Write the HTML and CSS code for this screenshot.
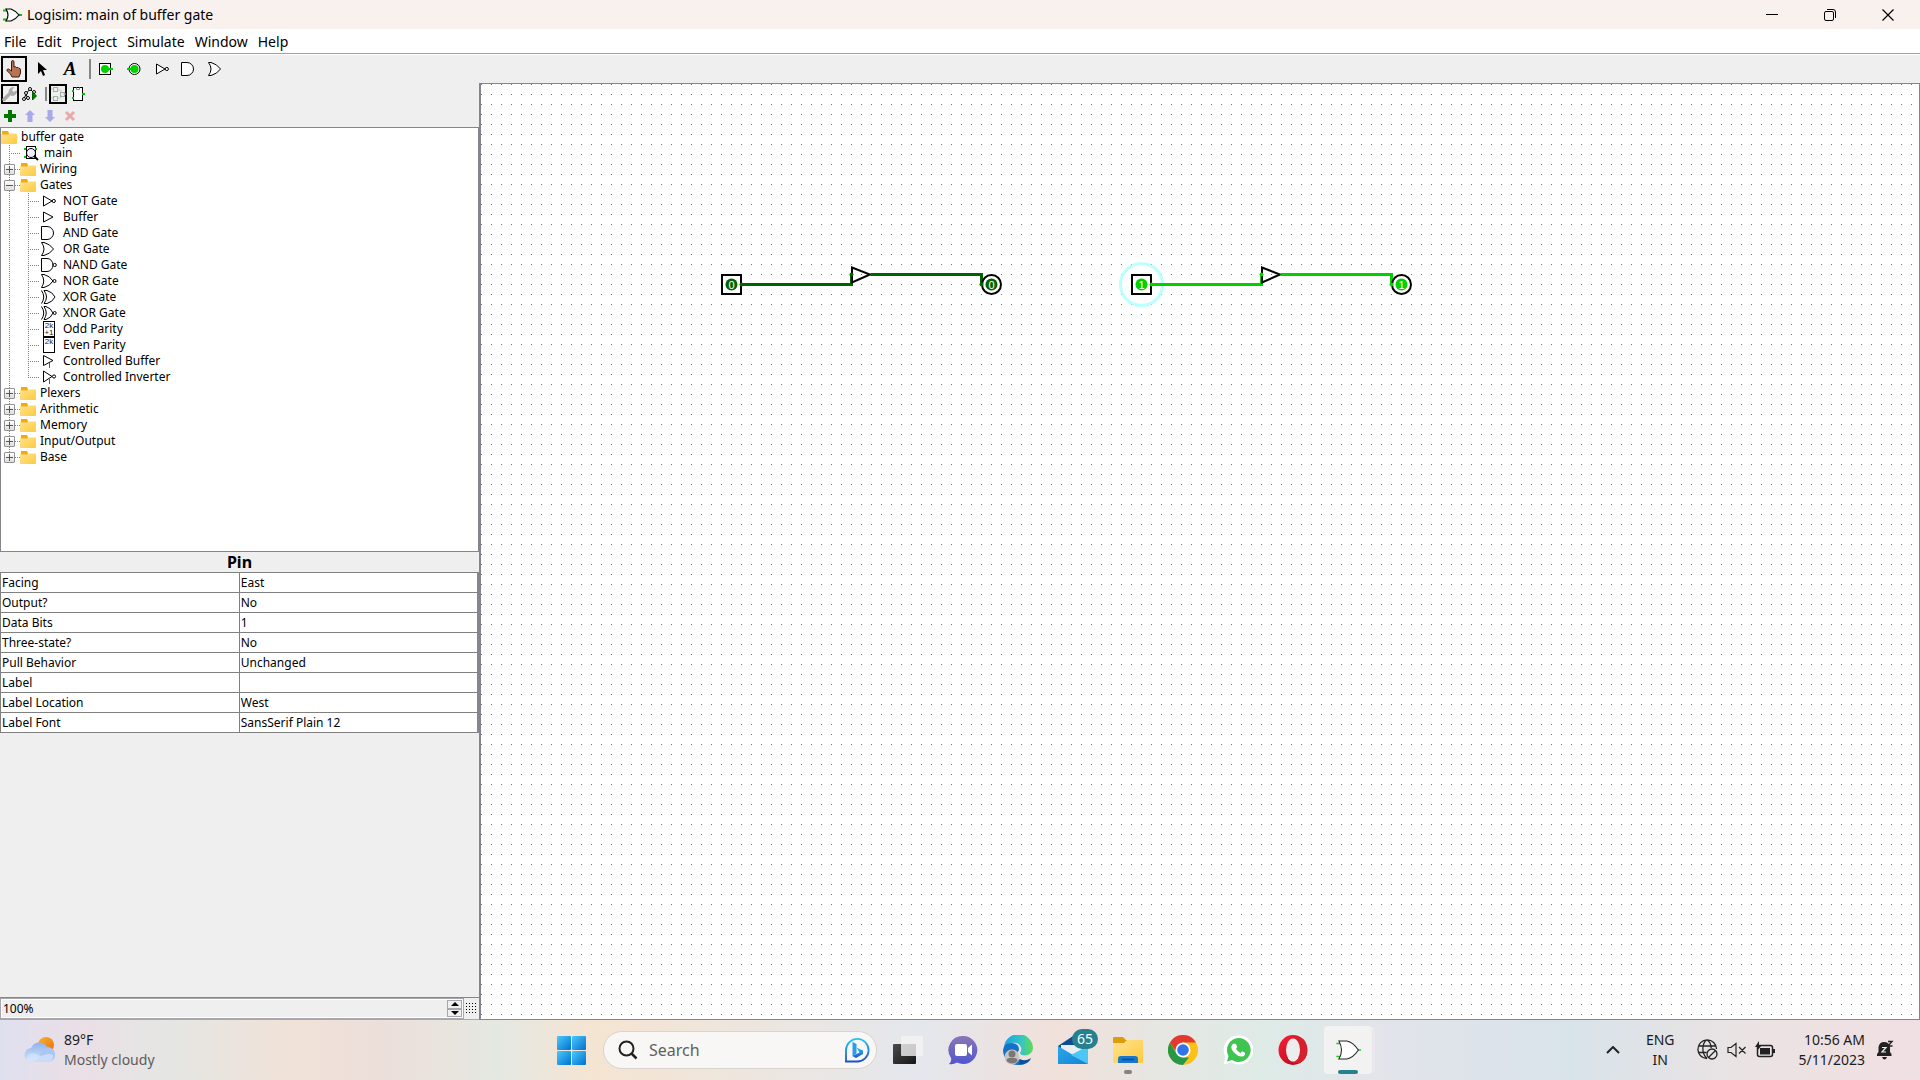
FILE: index.html
```html
<!DOCTYPE html>
<html lang="en">
<head>
<meta charset="utf-8">
<title>Logisim: main of buffer gate</title>
<link rel="stylesheet" href="styles.css">
</head>
<body>
<svg class="defs" aria-hidden="true">
  <defs>
    <linearGradient id="gFolder" x1="0" y1="0" x2="1" y2="1"><stop offset="0" stop-color="#ffe391"/><stop offset="1" stop-color="#ffca3c"/></linearGradient>
    <linearGradient id="gWin" x1="0" y1="0" x2="1" y2="1"><stop offset="0" stop-color="#4cc9fb"/><stop offset="1" stop-color="#0070d0"/></linearGradient>
    <linearGradient id="gBing" x1="0" y1="0" x2="0" y2="1"><stop offset="0" stop-color="#27c8ee"/><stop offset="1" stop-color="#1d50c8"/></linearGradient>
    <linearGradient id="gChat" x1="0" y1="0" x2="0" y2="1"><stop offset="0" stop-color="#8b76b8"/><stop offset="1" stop-color="#5055cf"/></linearGradient>
    <linearGradient id="gEdge" x1="0" y1="0" x2="1" y2="0"><stop offset="0" stop-color="#1f9fe0"/><stop offset=".6" stop-color="#35c5c8"/><stop offset="1" stop-color="#5fdc4c"/></linearGradient>
    <linearGradient id="gMail" x1="0" y1="0" x2="1" y2="1"><stop offset="0" stop-color="#2aa9e8"/><stop offset="1" stop-color="#1681d6"/></linearGradient>
    <linearGradient id="gCloud" x1="0" y1="0" x2="0" y2="1"><stop offset="0" stop-color="#8fb4ef"/><stop offset="1" stop-color="#d4e5fc"/></linearGradient>
    <linearGradient id="gSun" x1="0" y1="0" x2="1" y2="1"><stop offset="0" stop-color="#f8b62a"/><stop offset="1" stop-color="#ea6a12"/></linearGradient>
    <linearGradient id="gOpera" x1="0" y1="0" x2="1" y2="1"><stop offset="0" stop-color="#ff1f35"/><stop offset="1" stop-color="#a8071a"/></linearGradient>
    <linearGradient id="gDark" x1="0" y1="0" x2="1" y2="1"><stop offset="0" stop-color="#4a4a4a"/><stop offset="1" stop-color="#161616"/></linearGradient>
    <symbol id="folder" viewBox="0 0 16 13"><path d="M1 1h6l1 2h7v4H1z" fill="#f0a90c"/><rect x="0" y="2.500" width="16" height="10.500" rx="1" fill="url(#gFolder)"/><path d="M1 0h6l1 2.500-1 1H1z" fill="#f2ac10"/></symbol>
    <symbol id="not" viewBox="0 0 16 16"><path d="M2.500 3v10L11 8z" fill="#fff" stroke="#000"/><circle cx="12.800" cy="8" r="1.600" fill="#fff" stroke="#000"/></symbol>
    <symbol id="buffer" viewBox="0 0 16 16"><path d="M2.500 3v10L12 8z" fill="#fff" stroke="#000"/></symbol>
    <symbol id="and" viewBox="0 0 16 16"><path d="M.5 1.500H6a6.500 6.500 0 0 1 0 13H.5z" fill="#fff" stroke="#000"/></symbol>
    <symbol id="or" viewBox="0 0 16 16"><path d="M.5 1.500H3Q9 3 12.500 8 9 13 3 14.500H.5Q5.500 8 .5 1.500z" fill="#fff" stroke="#000"/></symbol>
    <symbol id="nand" viewBox="0 0 16 16"><path d="M.5 1.500H6a6 6.500 0 0 1 0 13H.5z" fill="#fff" stroke="#000"/><circle cx="13.700" cy="8" r="1.600" fill="#fff" stroke="#000"/></symbol>
    <symbol id="nor" viewBox="0 0 16 16"><path d="M.5 1.500H3Q9 3 12 8 9 13 3 14.500H.5Q5 8 .5 1.500z" fill="#fff" stroke="#000"/><circle cx="13.500" cy="8" r="1.500" fill="#fff" stroke="#000"/></symbol>
    <symbol id="xor" viewBox="0 0 16 16"><path d="M3 1.500H6Q11.500 3 14 8 11.500 13 6 14.500H3Q8 8 3 1.500zM.5 1.500Q5 8 .5 14.500" fill="#fff" stroke="#000"/></symbol>
    <symbol id="xnor" viewBox="0 0 16 16"><path d="M3 1.500H5Q10 3 12 8 10 13 5 14.500H3Q7.500 8 3 1.500zM.5 1.500Q5 8 .5 14.500" fill="#fff" stroke="#000"/><circle cx="13.700" cy="8" r="1.500" fill="#fff" stroke="#000"/></symbol>
    <symbol id="odd" viewBox="0 0 16 16"><rect x="2.500" y=".5" width="11" height="15" fill="#fff" stroke="#000"/><text x="8" y="7" class="mini">2k</text><text x="8" y="14" class="mini">+1</text></symbol>
    <symbol id="even" viewBox="0 0 16 16"><rect x="2.500" y=".5" width="11" height="15" fill="#fff" stroke="#000"/><text x="8" y="7" class="mini">2k</text></symbol>
    <symbol id="cbuf" viewBox="0 0 16 16"><path d="M2.500 2.500v10L12 7.500z" fill="#fff" stroke="#000"/><path d="M8.500 10v5" stroke="#00a000"/></symbol>
    <symbol id="cinv" viewBox="0 0 16 16"><path d="M2.500 2v11L11 7.500z" fill="#fff" stroke="#000"/><circle cx="13" cy="7.500" r="1.600" fill="#fff" stroke="#000"/><path d="M8.500 10v5" stroke="#00a000"/></symbol>
    <symbol id="logo" viewBox="0 0 20 14"><path d="M1 2.500h4M1 11.500h4M16 7h4" stroke="#0c0" stroke-width="2"/><path d="M4 1h5Q14 3 17 7 14 11 9 13H4Q8 7 4 1z" fill="#fff" stroke="#000" stroke-width="1.200"/></symbol>
  </defs>
</svg>

<div class="app">
  <header class="titlebar">
    <svg class="logo" width="20" height="14"><use href="#logo"/></svg>
    <h1>Logisim: main of buffer gate</h1>
    <div class="winbtns">
      <button aria-label="Minimize"><svg width="12" height="12"><path d="M0 5.500h12" stroke="#000"/></svg></button>
      <button aria-label="Restore"><svg width="12" height="12" fill="none" stroke="#000"><rect x=".5" y="2.500" width="9" height="9" rx="1.500"/><path d="M3 .5h6a2.500 2.500 0 0 1 2.500 2.500v6"/></svg></button>
      <button aria-label="Close"><svg width="12" height="12"><path d="M.5.5l11 11M11.500.5l-11 11" stroke="#000" stroke-width="1.200"/></svg></button>
    </div>
  </header>

  <nav class="menubar">
    <button>File</button><button>Edit</button><button>Project</button><button>Simulate</button><button>Window</button><button>Help</button>
  </nav>

  <div class="toolbar">
    <button class="on" aria-label="Poke tool"><svg width="16" height="18"><path d="M5.500 9V2q0-1.500 1.200-1.500T8 2v5q2-.8 2.500.5 1.800-.5 2.200.7 1.800-.2 1.800 1.800v3l-1.500 4H6L4.500 14 .8 10.500q0-1.500 1.700-1.500l3 2z" fill="#b87352" stroke="#3a1c10"/></svg></button>
    <button aria-label="Edit tool"><svg width="12" height="16"><path d="M2 1v12l3-3 2 5 2-1-2-5h4z" fill="#000"/></svg></button>
    <button class="text-tool" aria-label="Text tool">A</button>
    <i class="sep"></i>
    <button aria-label="Input pin"><svg width="14" height="14"><rect x=".5" y="1.500" width="11" height="11" fill="#fff" stroke="#000"/><circle cx="6" cy="7" r="4" fill="#00d200"/><path d="M9 7h5" stroke="#00d200" stroke-width="2"/></svg></button>
    <button aria-label="Output pin"><svg width="14" height="14"><circle cx="7.500" cy="7" r="5.500" fill="#fff" stroke="#000"/><circle cx="7.500" cy="7" r="4" fill="#00d200"/><path d="M0 7h5" stroke="#00d200" stroke-width="2"/></svg></button>
    <button aria-label="NOT gate"><svg width="16" height="16"><use href="#not"/></svg></button>
    <button class="close" aria-label="AND gate"><svg width="16" height="16"><use href="#and"/></svg></button>
    <button aria-label="OR gate"><svg width="16" height="16"><use href="#or"/></svg></button>
  </div>

  <main class="work">
    <aside class="side">
      <div class="minibar">
        <button class="on" aria-label="Show toolbox"><svg width="16" height="16"><path d="M2 13.500L8 7.500" stroke="#aaa" stroke-width="3.500" stroke-linecap="round"/><path d="M7 6q0-4 4.500-4.500L9.500 4l2 2.500L14.500 5q0 4.500-5 4.500z" fill="#aaa" stroke="#aaa"/></svg></button>
        <button aria-label="Show simulation"><svg width="16" height="16" fill="#fff" stroke="#000"><path d="M8 3L4 8l-2 5M8 3l5 5M4 8l2 5"/><circle cx="8" cy="3" r="1.500"/><circle cx="4" cy="7" r="1.500"/><circle cx="12" cy="6" r="1.500"/><circle cx="2" cy="13" r="1.500"/><circle cx="6" cy="12" r="1.500"/><path d="M10.500 6l4 4-4 4z" fill="#008000" stroke="#006000"/></svg></button>
        <i class="sep"></i>
        <button class="on" aria-label="Edit circuit layout"><svg width="16" height="16" fill="none" stroke="#aaa"><path d="M1 3h3M1 12h3M8 4h3v3M8 12h3V9M13 8h3" stroke="#a8e0a8"/><rect x="3.500" y="1.500" width="4" height="4"/><rect x="3.500" y="10.500" width="4" height="4"/><rect x="10.500" y="6.500" width="4" height="4"/></svg></button>
        <button aria-label="Edit circuit appearance"><svg width="14" height="16"><rect x="2.500" y="1.500" width="9" height="13" fill="#fff" stroke="#000"/><path d="M5.500 1.500v2h3v-2" fill="none" stroke="#888"/><path d="M1 5h2M1 12h2M11 8h3" stroke="#00c000" stroke-width="2"/></svg></button>
      </div>
      <div class="minibar edit">
        <button aria-label="Add circuit"><svg width="12" height="12"><path d="M6 0v12M0 6h12" stroke="#007800" stroke-width="4"/></svg></button>
        <button aria-label="Move up"><svg width="12" height="12"><path d="M6 0l5 5H8.500v7h-5V5H1z" fill="#a8a8ea"/></svg></button>
        <button aria-label="Move down"><svg width="12" height="12"><path d="M6 12l5-5H8.500V0h-5v7H1z" fill="#a8a8ea"/></svg></button>
        <button aria-label="Delete circuit"><svg width="12" height="12"><path d="M2 2l8 8M10 2l-8 8" stroke="#eaa8a8" stroke-width="3"/></svg></button>
      </div>

      <section class="explorer">
        <div class="node root"><svg width="16" height="13"><use href="#folder"/></svg>buffer gate</div>
        <ul class="tree">
          <li><div class="node circuit"><svg width="15" height="16"><rect x="2.500" y="1.500" width="9" height="12" fill="#fff" stroke="#000"/><circle cx="7" cy="8" r="4.500" fill="#eef" stroke="#000"/><path d="M10 11l4 4" stroke="#000" stroke-width="2"/><path d="M0 4h2M0 12h2M11 4h2" stroke="#00c000" stroke-width="2"/></svg>main</div></li>
          <li><div class="node"><button class="toggle" aria-label="Expand Wiring"></button><svg width="16" height="13"><use href="#folder"/></svg>Wiring</div></li>
          <li><div class="node"><button class="toggle open" aria-label="Collapse Gates"></button><svg width="16" height="13"><use href="#folder"/></svg>Gates</div>
            <ul class="gates">
              <li><div class="node"><svg width="16" height="16"><use href="#not"/></svg>NOT Gate</div></li>
              <li><div class="node"><svg width="16" height="16"><use href="#buffer"/></svg>Buffer</div></li>
              <li><div class="node"><svg width="16" height="16"><use href="#and"/></svg>AND Gate</div></li>
              <li><div class="node"><svg width="16" height="16"><use href="#or"/></svg>OR Gate</div></li>
              <li><div class="node"><svg width="16" height="16"><use href="#nand"/></svg>NAND Gate</div></li>
              <li><div class="node"><svg width="16" height="16"><use href="#nor"/></svg>NOR Gate</div></li>
              <li><div class="node"><svg width="16" height="16"><use href="#xor"/></svg>XOR Gate</div></li>
              <li><div class="node"><svg width="16" height="16"><use href="#xnor"/></svg>XNOR Gate</div></li>
              <li><div class="node"><svg width="16" height="16"><use href="#odd"/></svg>Odd Parity</div></li>
              <li><div class="node"><svg width="16" height="16"><use href="#even"/></svg>Even Parity</div></li>
              <li><div class="node"><svg width="16" height="16"><use href="#cbuf"/></svg>Controlled Buffer</div></li>
              <li><div class="node"><svg width="16" height="16"><use href="#cinv"/></svg>Controlled Inverter</div></li>
            </ul>
          </li>
          <li><div class="node"><button class="toggle" aria-label="Expand Plexers"></button><svg width="16" height="13"><use href="#folder"/></svg>Plexers</div></li>
          <li><div class="node"><button class="toggle" aria-label="Expand Arithmetic"></button><svg width="16" height="13"><use href="#folder"/></svg>Arithmetic</div></li>
          <li><div class="node"><button class="toggle" aria-label="Expand Memory"></button><svg width="16" height="13"><use href="#folder"/></svg>Memory</div></li>
          <li><div class="node"><button class="toggle" aria-label="Expand Input/Output"></button><svg width="16" height="13"><use href="#folder"/></svg>Input/Output</div></li>
          <li><div class="node"><button class="toggle" aria-label="Expand Base"></button><svg width="16" height="13"><use href="#folder"/></svg>Base</div></li>
        </ul>
      </section>

      <section class="attributes">
        <h2 id="attr-title">Pin</h2>
        <table aria-labelledby="attr-title">
          <tr><th scope="row">Facing</th><td>East</td></tr>
          <tr><th scope="row">Output?</th><td>No</td></tr>
          <tr><th scope="row">Data Bits</th><td>1</td></tr>
          <tr><th scope="row">Three-state?</th><td>No</td></tr>
          <tr><th scope="row">Pull Behavior</th><td>Unchanged</td></tr>
          <tr><th scope="row">Label</th><td></td></tr>
          <tr><th scope="row">Label Location</th><td>West</td></tr>
          <tr><th scope="row">Label Font</th><td>SansSerif Plain 12</td></tr>
        </table>
      </section>

      <div class="zoombar">
        <div class="spinner">
          <input type="text" value="100%" aria-label="Zoom">
          <div class="steps">
            <button aria-label="Zoom in"><svg width="8" height="4"><path d="M0 4L4 0l4 4z"/></svg></button>
            <button aria-label="Zoom out"><svg width="8" height="4"><path d="M0 0l4 4 4-4z"/></svg></button>
          </div>
        </div>
        <button class="gridbtn" aria-label="Toggle grid"></button>
      </div>
    </aside>

    <section class="canvas">
      <svg width="100%" height="100%" fill="none">
        <g transform="translate(.5 .5)">
          <g class="off">
            <rect class="body" x="240.500" y="190.500" width="19" height="19"/>
            <circle class="value" cx="250" cy="200" r="6"/><text x="250" y="204">0</text>
            <path class="wire" d="M260 200H370V190"/>
            <path class="body" d="M370.500 183v15l18-8z"/>
            <path class="wire" d="M389 190H500V200"/>
            <circle class="body" cx="510" cy="200" r="9.500"/>
            <circle class="value" cx="510" cy="200" r="6"/><text x="510" y="204">0</text>
            <circle class="dot" cx="260" cy="200" r="2"/><circle class="dot" cx="370" cy="190" r="2"/><circle class="dot" cx="500" cy="200" r="2"/>
          </g>
          <g class="live" transform="translate(410 0)">
            <circle class="halo" cx="250" cy="200" r="21"/>
            <rect class="body" x="240.500" y="190.500" width="19" height="19"/>
            <circle class="value" cx="250" cy="200" r="6"/><text x="250" y="204">1</text>
            <path class="wire" d="M260 200H370V190"/>
            <path class="body" d="M370.500 183v15l18-8z"/>
            <path class="wire" d="M389 190H500V200"/>
            <circle class="body" cx="510" cy="200" r="9.500"/>
            <circle class="value" cx="510" cy="200" r="6"/><text x="510" y="204">1</text>
            <circle class="dot" cx="260" cy="200" r="2"/><circle class="dot" cx="370" cy="190" r="2"/><circle class="dot" cx="500" cy="200" r="2"/>
          </g>
        </g>
      </svg>
    </section>
  </main>

  <footer class="taskbar">
    <button class="weather">
      <svg width="32" height="28"><circle cx="22" cy="9" r="8" fill="url(#gSun)"/><path d="M8 26a7 7 0 0 1-1-14 9 9 0 0 1 16-1 7.500 7.500 0 0 1 1 15z" fill="url(#gCloud)"/><path d="M16 18q3-6 8-6a7 7 0 0 1 0 14H8q6-1 8-8z" fill="#a9c6f5"/><path d="M4 20q3-4 8-2 4 3 8 1 5-2 9 0v3q-2 4-5 4H8q-4 0-5-3z" fill="#d7e6fc" opacity=".7"/></svg>
      <span>89°F<small>Mostly cloudy</small></span>
    </button>

    <div class="apps">
      <button aria-label="Start"><svg width="30" height="30" fill="url(#gWin)"><rect x="0" y="1" width="14" height="14" rx="1"/><rect x="15" y="1" width="14" height="14" rx="1"/><rect x="0" y="16" width="14" height="14" rx="1"/><rect x="15" y="16" width="14" height="14" rx="1"/></svg></button>
      <div class="search">
        <svg width="20" height="20" fill="none" stroke="#222" stroke-width="2"><circle cx="8.500" cy="8.500" r="7"/><path d="M13.500 13.500l5 5" stroke-width="2.500"/></svg>
        <input type="text" placeholder="Search" aria-label="Search">
        <svg width="26" height="26" fill="none"><path d="M2 24.500V13a11.300 11.300 0 1 1 11 11.500z" stroke="url(#gBing)" stroke-width="1.800"/><path d="M8.500 5l4 2v9.500l-4 3z" fill="#2a9cf0"/><path d="M12.500 10.500l6.500 3v3.500l-7 4-3.500-2 7-3.500z" fill="url(#gBing)"/></svg>
      </div>
      <button aria-label="Task view"><svg width="30" height="30"><rect x="0" y="9" width="23" height="20" rx="1" fill="url(#gDark)"/><rect x="8" y="1" width="22" height="20" rx="1" fill="#f4f4f4" opacity=".8"/></svg></button>
      <button aria-label="Chat"><svg width="30" height="30"><path d="M15 1a14 14 0 1 1-6 26.500Q5 30 1 29q3-3 2-6A14 14 0 0 1 15 1z" fill="url(#gChat)"/><rect x="7" y="9" width="12" height="12" rx="2" fill="#fff"/><path d="M20 13l4-3.500v11L20 17z" fill="#fff"/></svg></button>
      <button aria-label="Edge"><svg width="30" height="30"><path d="M1 14A14.500 14.500 0 0 1 30 13q-.5 7-8 7.500-5 0-5-3 2-2 1-5Q16 7 9 8 3 9 1 14z" fill="url(#gEdge)"/><path d="M0 15q1-7 8-7 8 0 8 7-4 5 1 10 4 3 11-1-4 6-12 6A15 15 0 0 1 0 15z" fill="#1672c8"/><path d="M17 24q5 3 11-1-3 6-12 6.500z" fill="#0c4f95"/><circle cx="9" cy="22" r="7.500" fill="#c8c6c4"/><circle cx="9" cy="19" r="3.500" fill="#7a7774"/><path d="M3.500 26q0-3 3-3h5q3 0 3 3-5 5-11 0z" fill="#7a7774"/></svg></button>
      <button class="badged" aria-label="Mail"><svg width="30" height="30"><path d="M0 11L15 1l15 10v4H0z" fill="#0f4d93"/><path d="M3 10h24v8L15 22 3 17z" fill="#e8eef5"/><path d="M0 11l15 9 15-9v18H0z" fill="url(#gMail)"/><path d="M30 11L13 20l17 9z" fill="#4cc6f4"/></svg><span class="badge">65</span></button>
      <button class="running" aria-label="File Explorer"><svg width="30" height="30"><path d="M0 3q0-1 1-1h9l3 3h16v8H0z" fill="#dd9c0a"/><path d="M0 8h11l3-3h15q1 0 1 1v22H0z" fill="url(#gFolder)"/><path d="M5 28v-4q0-3 3-3h14q3 0 3 3v4z" fill="#1679cf"/><path d="M9 24.500h12" stroke="#0b4a92" stroke-width="1.500"/></svg></button>
      <button aria-label="Chrome"><svg width="30" height="30"><circle cx="15" cy="15" r="15" fill="#fbc116"/><path d="M2 7.500A15 15 0 0 1 28 7.500H15L9 18z" fill="#e23a2e"/><path d="M2 7.500l6.500 11.250L15 22.500h6L15 30A15 15 0 0 1 2 7.500z" fill="#279847"/><circle cx="15" cy="15" r="7.500" fill="#fff"/><circle cx="15" cy="15" r="5.800" fill="#2f74e8"/></svg></button>
      <button aria-label="WhatsApp"><svg width="30" height="30"><path d="M15.500.5a14.500 14.500 0 1 1-7 27L.5 29.500l2-7.500a14.500 14.500 0 0 1 13-21.500z" fill="#fff"/><path d="M15.500 3a12 12 0 1 1-6.500 22L4 26.500 5.500 21A12 12 0 0 1 15.500 3z" fill="#3fc351"/><path d="M11 8.500l2 .5 1.200 3-1.200 1.800q1.500 3 4.500 4.200l1.500-1.700 3 1.500q.5 3-2.500 3.700-4 .5-8-3.500t-3-7q.8-2.500 2.500-2.500z" fill="#fff"/></svg></button>
      <button aria-label="Opera"><svg width="30" height="30"><ellipse cx="15" cy="15" rx="14.500" ry="15" fill="url(#gOpera)"/><path d="M15 2q8-1 12 4 4 9 0 18-4 5-12 4z" fill="#d8202c"/><ellipse cx="15" cy="15" rx="7" ry="11.500" fill="#eceeed"/></svg></button>
      <button class="active" aria-label="Logisim"><svg width="26" height="20" viewBox="0 0 20 14"><path d="M1 2h4M1 12h4M16 7h4" stroke="#2c2"/><path d="M3 0h6Q14 1 18 7 14 13 9 14H3Q7 7 3 0z" fill="#fff" stroke="#222" stroke-width=".8"/></svg></button>
    </div>

    <div class="tray">
      <button aria-label="Show hidden icons"><svg width="14" height="8" fill="none" stroke="#222" stroke-width="2"><path d="M1 7l6-6 6 6"/></svg></button>
      <button class="lang">ENG<br>IN</button>
      <button class="status" aria-label="Network, volume, battery">
        <svg width="22" height="22" fill="none" stroke="#222" stroke-width="1.300"><path d="M10 19.500A9.300 9.300 0 1 1 19.500 10M10 19.500C4 14 5 4 10 .8c3 2 4 5 4.200 8.200M1.500 7h17M1.500 13.500h8"/><circle cx="15" cy="15" r="5"/><path d="M11.500 18.500l7-7"/></svg>
        <svg width="20" height="16" fill="none" stroke="#222" stroke-width="1.200"><path d="M1 5.500h3L9 1.500v13L4 10.500H1zM12 5l6.500 6.500M18.500 5L12 11.500"/></svg>
        <svg width="20" height="18"><rect x="2.500" y="4.500" width="15" height="11" rx="2" fill="none" stroke="#222" stroke-width="1.500"/><rect x="5" y="7" width="10" height="6.500" fill="#222"/><path d="M18 8h2v4h-2z" fill="#222"/><path d="M4 0L0 6h3l-1 4 5-6H4z" fill="#222"/></svg>
      </button>
      <button class="clock">10:56 AM<br>5/11/2023</button>
      <button class="bell" aria-label="Notifications"><svg width="18" height="20"><path d="M1 16V14l1.500-2V7q1-5 5.500-5 5 0 6 5v5l1.500 2v2zM6 17h5q-1 2.500-2.500 2.500T6 17z" fill="#222"/><path d="M6 7.500h4L6 12h4" fill="none" stroke="#eee" stroke-width="1.200"/><path d="M12 1.500h4l-4 4.500h4.500" fill="none" stroke="#222" stroke-width="1.400"/></svg></button>
    </div>
  </footer>
</div>
</body>
</html>
```
FILE: styles.css
```css
* { box-sizing: border-box; }

body {
  margin: 0;
  font: 12px/16px "Noto Sans", "Open Sans", sans-serif;
  color: #000;
}

button {
  display: flex;
  align-items: center;
  justify-content: center;
  padding: 0;
  border: 0;
  background: none;
  font: inherit;
  color: inherit;
}

svg { flex: none; display: block; }
.defs { position: absolute; width: 0; height: 0; }
.mini { font: 8px "Liberation Sans", sans-serif; text-anchor: middle; fill: #222; }

.app {
  display: flex;
  flex-direction: column;
  height: 100vh;
  background: #efefef;
}

/* title and menu */
.titlebar {
  display: flex;
  align-items: center;
  flex: none;
  height: 29px;
  padding-left: 2px;
  gap: 5px;
  background: #f9f1ee;
}
.titlebar h1 { margin: 0; font-size: 14px; font-weight: 400; line-height: 20px; }
.winbtns { display: flex; align-self: stretch; margin-left: auto; padding-right: 3px; }
.winbtns button { width: 58px; }

.menubar {
  display: flex;
  flex: none;
  gap: 10px;
  height: 25px;
  padding: 1px 0 0 4px;
  background: #fff;
  border-bottom: 1px solid #a0a0a0;
  font-size: 14px;
}

/* toolbars */
.toolbar {
  display: flex;
  align-items: center;
  flex: none;
  height: 29px;
  border-top: 1px solid #fff;
}
.toolbar button { width: 28px; height: 28px; }
.toolbar .close { width: 26px; }
.toolbar .on { border: 2px solid #000; width: 26px; height: 26px; margin: 1px; }
.toolbar .sep { margin-right: 1px; }
.text-tool { font: italic bold 19px "Liberation Serif", serif; }
.sep { width: 2px; height: 20px; margin: 0 3px 0 5px; background: #868686; }

.work { display: grid; grid-template-columns: 1fr 3fr; flex: 1; min-height: 0; }
.side { display: flex; flex-direction: column; min-width: 0; border-right: 1px solid #84868f; }

.minibar { display: flex; align-items: center; flex: none; height: 21px; }
.minibar button { width: 18px; height: 20px; margin: 0 1px; }
.minibar .on { border: 2px solid #000; }
.minibar .sep { height: 14px; margin-right: 1px; }
.minibar.edit { height: 23px; }

/* explorer tree */
.explorer {
  flex: 424 1 0;
  min-height: 0;
  overflow: hidden;
  padding-top: 1px;
  background: #fff;
  border: 1px solid #84868f;
}
.explorer ul { list-style: none; margin: 0; padding: 0; }
.node { display: flex; align-items: center; gap: 4px; height: 16px; white-space: pre; }
.node.circuit { padding-left: 23px; gap: 5px; }
.explorer li {
  background-image:
    repeating-linear-gradient(#808080 0 1px, transparent 1px 2px),
    repeating-linear-gradient(90deg, #808080 0 1px, transparent 1px 2px);
  background-repeat: no-repeat;
  background-size: 1px 100%, 11px 1px;
  background-position: 8px 0, 8px 8px;
}
.explorer li:last-child { background-size: 1px 8px, 11px 1px; }
.explorer .gates li { background-position: 27px 0, 27px 8px; }
.gates .node { padding-left: 40px; gap: 6px; }

.toggle {
  width: 11px;
  height: 11px;
  margin: 0 1px 0 3px;
  border: 1px solid #929292;
  border-radius: 1px;
  background:
    linear-gradient(#3a56a0, #3a56a0) center / 7px 1px no-repeat,
    linear-gradient(#3a56a0, #3a56a0) center / 1px 7px no-repeat,
    linear-gradient(#fff, #ddd);
}
.toggle.open {
  background:
    linear-gradient(#3a56a0, #3a56a0) center / 7px 1px no-repeat,
    linear-gradient(#fff, #ddd);
}

/* attribute table */
.attributes {
  flex: 447 1 0;
  min-height: 0;
  border-bottom: 1px solid #84868f;
}
.attributes h2 { margin: 0; font-size: 16px; line-height: 20px; text-align: center; }
.attributes table {
  width: 100%;
  table-layout: fixed;
  border-collapse: collapse;
  border-right: 2px solid #84868f;
  background: #fff;
}
.attributes th, .attributes td {
  height: 20px;
  padding: 1px 1px 0;
  border: 1px solid #808080;
  font-weight: 400;
  text-align: left;
  line-height: 16px;
}

/* zoom control */
.zoombar { display: flex; flex: none; height: 22px; border-bottom: 1px solid #a8a8ac; }
.spinner {
  display: flex;
  flex: 1;
  min-width: 0;
  padding: 1px;
  border: 1px solid #a8a8ac;
  background: #fff;
}
.spinner input {
  flex: 1;
  min-width: 0;
  padding: 1px 1px 0;
  border: 0;
  background: #efefef;
  font: inherit;
}
.steps { display: flex; flex-direction: column; width: 15px; }
.steps button { flex: 1; border: 1px solid #a8a8ac; background: #efefef; }
.gridbtn {
  width: 15px;
  padding: 5px 2px;
  background: conic-gradient(from 270deg at 1px 1px, #000 90deg, transparent 0) 2px 2px / 3px 3px;
  background-clip: content-box;
}

/* circuit canvas */
.canvas {
  min-width: 0;
  border: 1px solid #84868f;
  background: conic-gradient(from 270deg at 1px 1px, #777 90deg, #fff 0) 0 0 / 10px 10px;
}
.canvas text { font: 11px "Liberation Sans", sans-serif; text-anchor: middle; fill: #fff; }
.body { stroke: #000; stroke-width: 2; }
.wire { stroke-width: 3; }
.halo { stroke: #bff; stroke-width: 3; }
.off .wire { stroke: #006400; }
.off .value, .off .dot { fill: #006400; }
.live .wire { stroke: #00d200; }
.live .value, .live .dot { fill: #00d200; }

/* taskbar */
.taskbar {
  display: grid;
  grid-template-columns: 1fr auto 1fr;
  align-items: center;
  flex: none;
  height: 60px;
  color: #1b1b1b;
  font-size: 14px;
  line-height: 20px;
  background: linear-gradient(90deg, #dfe0ef, #eadfe6 4%, #e5e6e3 9%, #f0e2d8 15%, #ecdfda 20%, #e5e8e2 26%, #f5e4d2 31%, #ece6e0 40%, #e4e7ed 48%, #f1e0da 55%, #e5e7e3 61%, #deebe7 66%, #e2e4ea 72%, #d9e3ea 82%, #ebe3e3 91%, #f1dfe2);
}
.weather { justify-content: flex-start; justify-self: start; gap: 8px; padding-left: 24px; text-align: left; }
.weather small { display: block; font-size: inherit; color: #5c5c5c; }

.apps { display: flex; align-items: center; gap: 7px; }
.apps button { width: 48px; height: 48px; border-radius: 4px; }
.search {
  display: flex;
  align-items: center;
  gap: 11px;
  width: 274px;
  height: 38px;
  padding: 0 6px 0 14px;
  border: 1px solid #d8d4d0;
  border-radius: 19px;
  background: #f9f7f5;
}
.search input { flex: 1; min-width: 0; border: 0; padding: 0; background: none; outline: 0; font: 16px/20px "Noto Sans", sans-serif; }
.search input::placeholder { color: #5f5f5f; opacity: 1; }

.badged, .running, .active { position: relative; }
.badge {
  position: absolute;
  top: 3px;
  right: -1px;
  width: 26px;
  border-radius: 10px;
  background: #26808e;
  color: #fff;
}
.apps .active { background: #f3f2f3; box-shadow: 4px 0 0 -1px #eae8ee; }
.running::after, .active::after {
  content: "";
  position: absolute;
  bottom: 0;
  width: 8px;
  height: 4px;
  border-radius: 2px;
  background: #868280;
}
.active::after { width: 20px; background: #26808e; }

.tray { display: flex; align-items: center; justify-self: end; padding-right: 26px; }
.lang { margin-left: 26px; text-align: center; }
.status { gap: 8px; margin-left: 22px; }
.clock { margin-left: 24px; text-align: right; }
.bell { margin-left: 11px; }
```
